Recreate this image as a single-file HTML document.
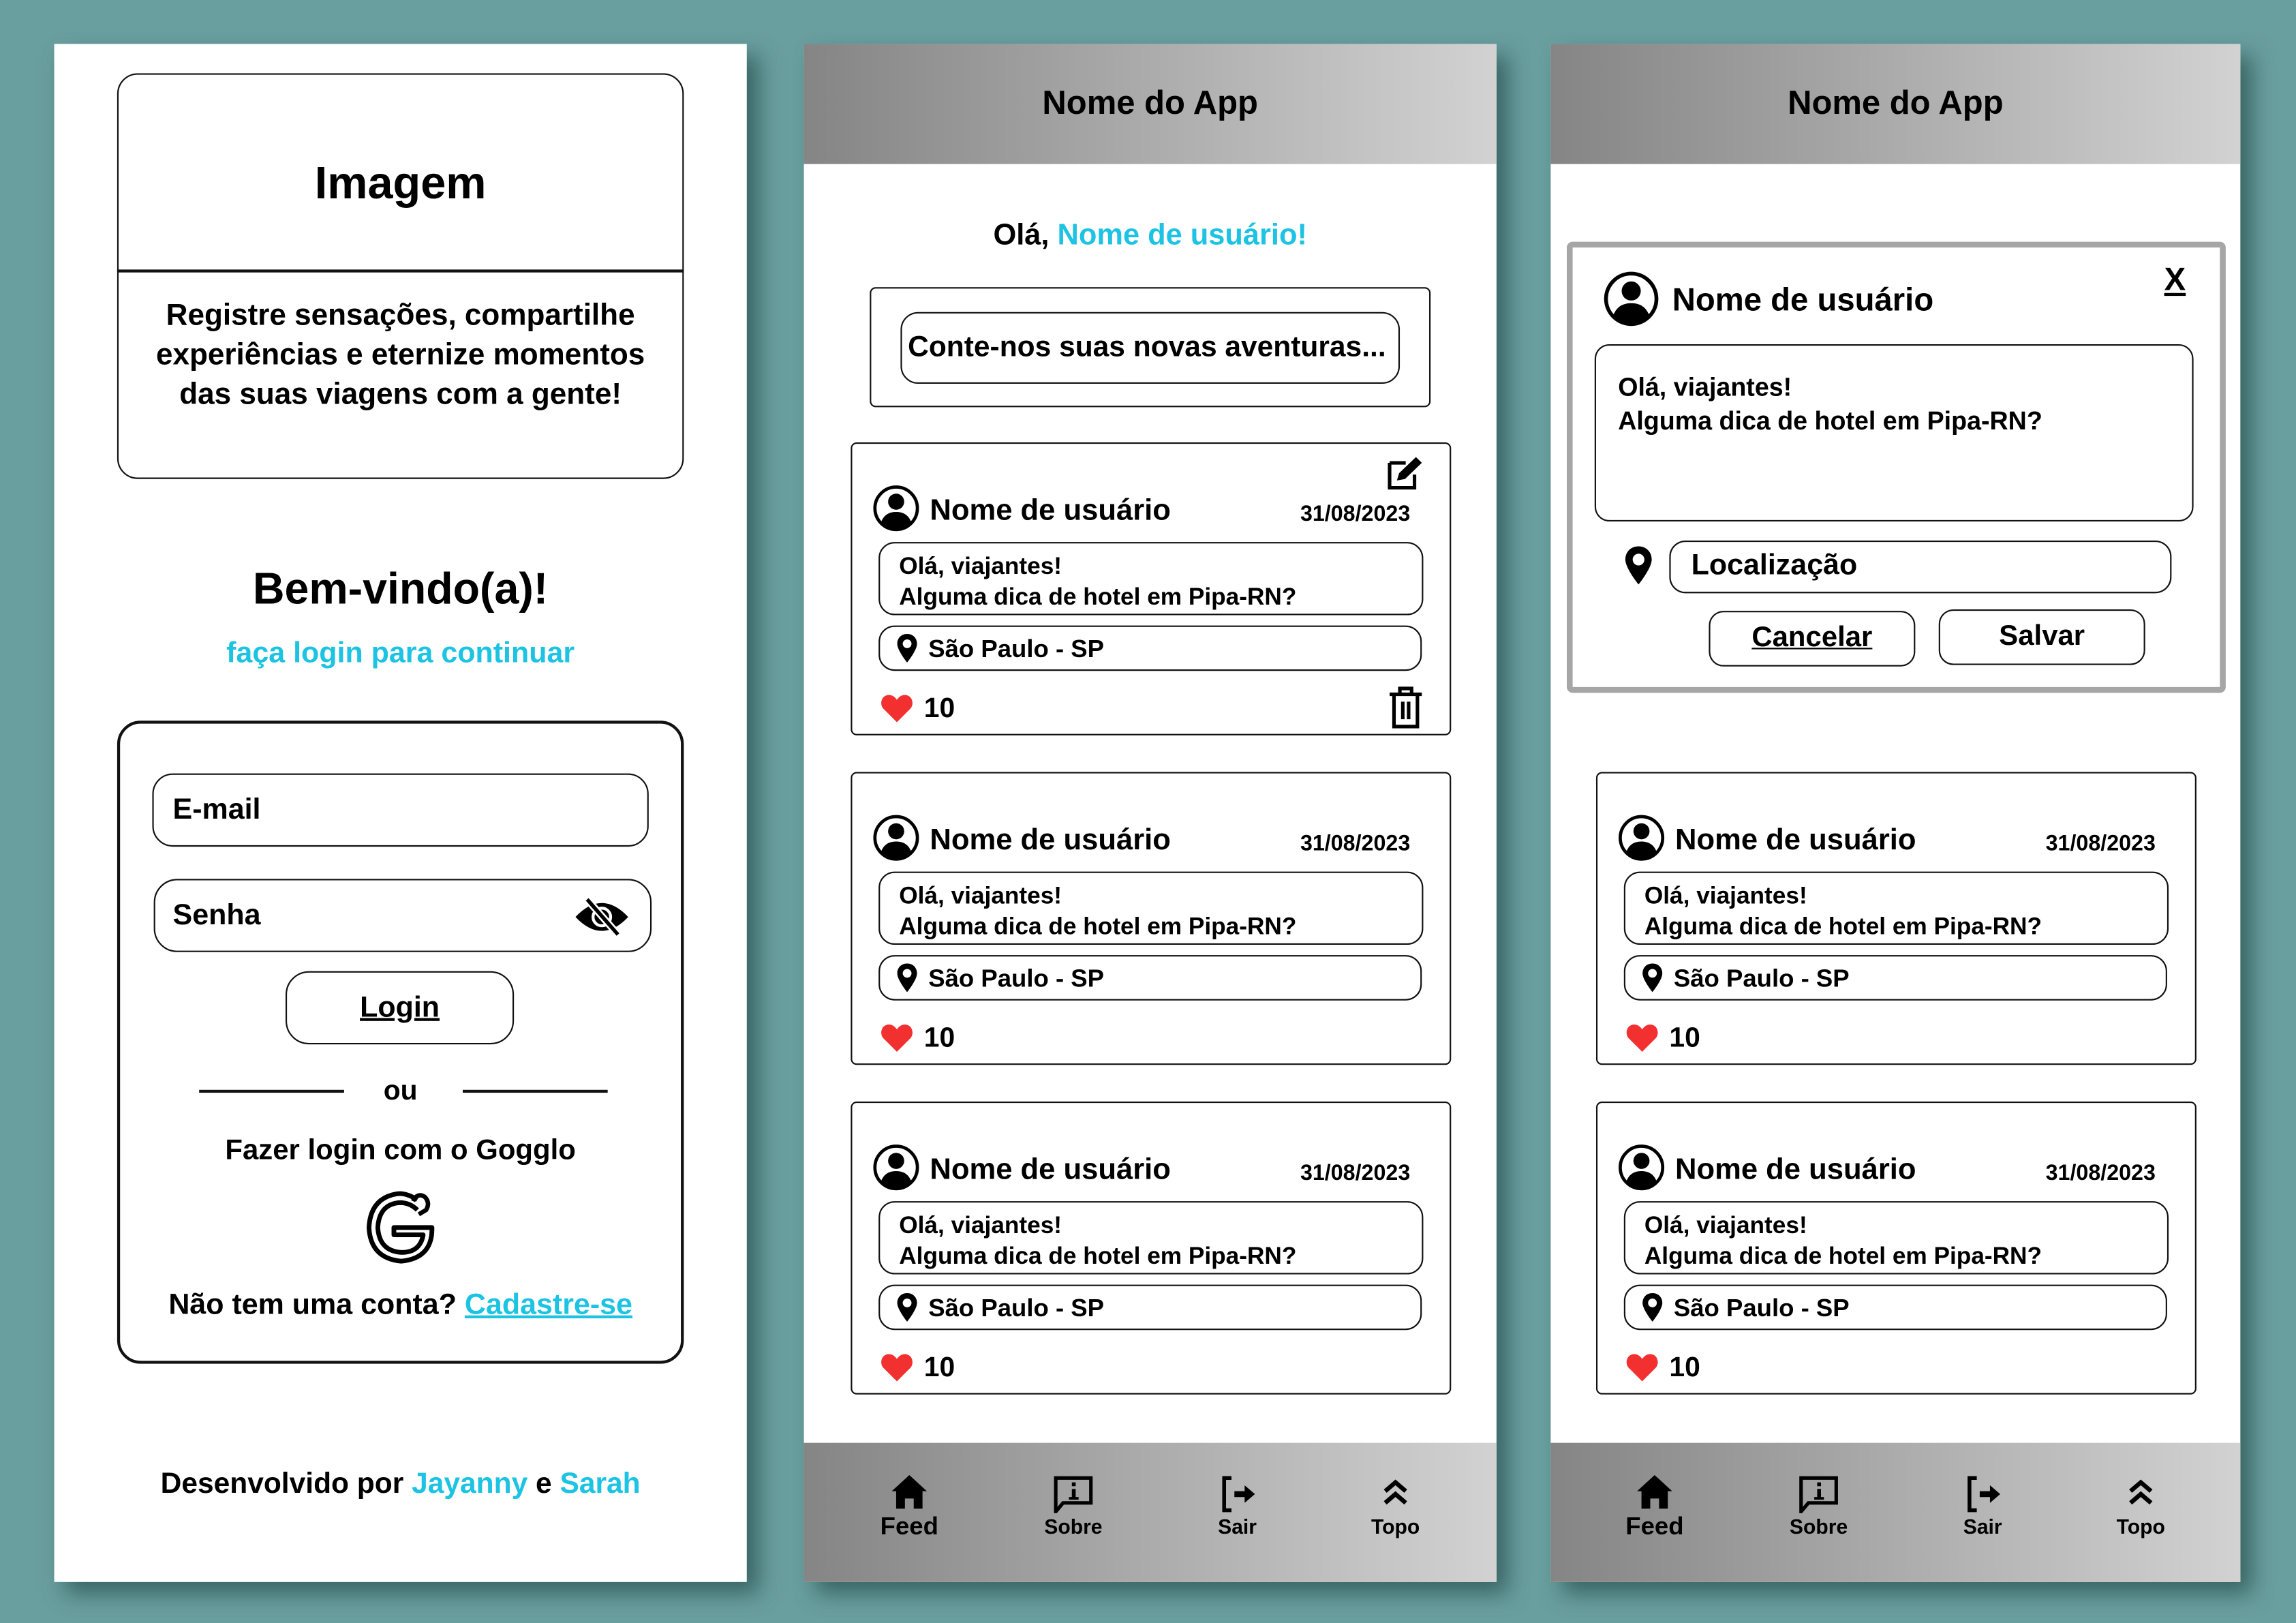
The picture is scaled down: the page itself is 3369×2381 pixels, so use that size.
<!DOCTYPE html>
<html><head><meta charset="utf-8">
<style>
html,body{margin:0;padding:0;width:3369px;height:2381px;overflow:hidden;background:#6a9f9f;}
#w{position:absolute;left:0;top:0;width:1568px;height:1108px;transform:scale(2.14860,2.14892);transform-origin:0 0;font-family:"Liberation Sans",sans-serif;font-weight:bold;color:#000;}
.p{position:absolute;background:#fff;box-shadow:8px 8px 14px rgba(40,80,80,.75);}
.a{position:absolute;}
.t{position:absolute;white-space:nowrap;line-height:1;transform:translateY(-50%);}
.c{left:0;right:0;text-align:center;}
.b{position:absolute;border:1.5px solid #111;box-sizing:border-box;}
.cy{color:#1cc3e2;}
.hd{position:absolute;left:0;right:0;height:82px;background:linear-gradient(90deg,#858585,#d2d2d2);}
.card{position:absolute;width:410px;height:200px;border:1.5px solid #111;border-radius:4px;box-sizing:border-box;background:#fff;}
</style></head><body>
<svg width="0" height="0" style="position:absolute">
<defs>
<symbol id="av" viewBox="0 0 32 32"><circle cx="16" cy="16" r="14.5" fill="none" stroke="#000" stroke-width="2.2"/><circle cx="16" cy="11.5" r="5.5"/><path d="M5.5 26 Q8 18.5 16 18.5 Q24 18.5 26.5 26 Q22 31 16 31 Q10 31 5.5 26Z"/></symbol>
<symbol id="pin" viewBox="0 0 20 28"><path d="M10 1 C4.5 1 1 5 1 10 C1 16 10 27 10 27 C10 27 19 16 19 10 C19 5 15.5 1 10 1Z M10 6 A4 4 0 1 1 9.99 6Z" fill-rule="evenodd"/></symbol>
<symbol id="ht" viewBox="0 0 24 22"><path d="M12 21 L2.5 11.5 C-0.5 8.5 0.5 2 6 1.5 C9 1.3 11 3.5 12 5 C13 3.5 15 1.3 18 1.5 C23.5 2 24.5 8.5 21.5 11.5Z" fill="#f23030"/></symbol>
</defs></svg>
<div id="w">

<!-- Panel 1 -->
<div class="p" style="left:37px;top:30px;width:473px;height:1050px;">
  <div class="b" style="left:43px;top:20px;width:387px;height:277px;border-radius:14px;"></div>
  <div class="a" style="left:43px;top:154px;width:387px;height:1.5px;background:#111;"></div>
  <div class="t c" style="top:95px;font-size:31px;">Imagem</div>
  <div class="t c" style="top:186px;font-size:20.5px;">Registre sensações, compartilhe</div>
  <div class="t c" style="top:213px;font-size:20.5px;">experiências e eternize momentos</div>
  <div class="t c" style="top:240px;font-size:20.5px;">das suas viagens com a gente!</div>
  <div class="t c" style="top:373px;font-size:30px;">Bem-vindo(a)!</div>
  <div class="t c cy" style="top:416px;font-size:20px;">faça login para continuar</div>
  <div class="b" style="left:43px;top:462px;width:387px;height:439px;border-radius:16px;border-width:2.5px;"></div>
  <div class="b" style="left:67px;top:498px;width:339px;height:50px;border-radius:14px;"></div>
  <div class="t" style="left:81px;top:523px;font-size:20px;">E-mail</div>
  <div class="b" style="left:68px;top:570px;width:340px;height:50px;border-radius:16px;"></div>
  <div class="t" style="left:81px;top:595px;font-size:20px;">Senha</div>
  <svg class="a" style="left:355px;top:583px" width="38" height="26" viewBox="0 0 38 26"><path d="M1 13 Q19 -6 37 13 Q19 32 1 13Z"/><circle cx="19" cy="13" r="6" fill="none" stroke="#fff" stroke-width="2"/><line x1="9" y1="1" x2="30" y2="25" stroke="#fff" stroke-width="5"/><line x1="9" y1="1" x2="30" y2="25" stroke="#000" stroke-width="2.5"/></svg>
  <div class="b" style="left:158px;top:633px;width:156px;height:50px;border-radius:16px;"></div>
  <div class="t" style="left:158px;width:156px;text-align:center;top:658px;font-size:20px;text-decoration:underline;">Login</div>
  <div class="a" style="left:99px;top:714px;width:99px;height:1.5px;background:#111;"></div>
  <div class="a" style="left:279px;top:714px;width:99px;height:1.5px;background:#111;"></div>
  <div class="t c" style="top:715px;font-size:19px;">ou</div>
  <div class="t c" style="top:756px;font-size:19.5px;">Fazer login com o Gogglo</div>
  <svg class="a" style="left:210px;top:781px" width="54" height="54" viewBox="0 0 54 54"><path d="M38 8 Q30 3 24 4 Q6 7 5 27 Q6 48 27 50 Q48 48 48 28 L48 27 L22 27 L22 32 L42 32 Q40 44 27 44 Q12 43 11 27 Q12 11 26 10 Q33 10 38 15" fill="none" stroke="#000" stroke-width="3.2" stroke-linejoin="round"/><path d="M35 9 Q38 3 43 6 Q47 10 44 15 L39 18" fill="none" stroke="#000" stroke-width="3"/></svg>
  <div class="t c" style="top:861px;font-size:20px;">Não tem uma conta? <span class="cy" style="text-decoration:underline;">Cadastre-se</span></div>
  <div class="t c" style="top:984px;font-size:19.8px;">Desenvolvido por <span class="cy">Jayanny</span> e <span class="cy">Sarah</span></div>
</div>

<!-- Panel 2 -->
<div class="p" style="left:549px;top:30px;width:473px;height:1050px;">
  <div class="hd" style="top:0;"></div>
  <div class="t c" style="top:40px;font-size:22.8px;">Nome do App</div>
  <div class="t c" style="top:131px;font-size:20.2px;">Olá, <span class="cy">Nome de usuário!</span></div>
  <div class="b" style="left:45px;top:166px;width:383px;height:82px;border-radius:4px;"></div>
  <div class="b" style="left:66px;top:183px;width:341px;height:49px;border-radius:12px;"></div>
  <div class="t" style="left:71px;top:208px;font-size:19.8px;">Conte-nos suas novas aventuras...</div>

  <div class="card" style="left:32px;top:272px;">
    <svg class="a" style="left:365px;top:8px" width="26" height="24" viewBox="0 0 26 24"><path d="M2 5 H13 M2 5 V22 H19 V13" fill="none" stroke="#000" stroke-width="2.4"/><path d="M7 17 L8.5 12 L20 1 L24 5 L12.5 16Z"/></svg>
    <svg class="a" style="left:14px;top:28px" width="32" height="32"><use href="#av"/></svg>
    <div class="t" style="left:53px;top:46px;font-size:20.3px;">Nome de usuário</div>
    <div class="t" style="left:306px;top:48px;font-size:15px;">31/08/2023</div>
    <div class="b" style="left:18px;top:67px;width:372px;height:50px;border-radius:11px;"></div>
    <div class="t" style="left:32px;top:84px;font-size:16.4px;">Olá, viajantes!</div>
    <div class="t" style="left:32px;top:105px;font-size:16.4px;">Alguma dica de hotel em Pipa-RN?</div>
    <div class="b" style="left:18px;top:124px;width:371px;height:31px;border-radius:11px;"></div>
    <svg class="a" style="left:30px;top:129px" width="15" height="21"><use href="#pin"/></svg>
    <div class="t" style="left:52px;top:140px;font-size:17px;">São Paulo - SP</div>
    <svg class="a" style="left:19px;top:170px" width="23" height="21"><use href="#ht"/></svg>
    <div class="t" style="left:49px;top:181px;font-size:19px;">10</div>
    <svg class="a" style="left:366px;top:165px" width="24" height="30" viewBox="0 0 24 30"><path d="M1 6 H23 M8 6 V2 H16 V6 M4 6 V28 H20 V6 M10 11 V23 M14 11 V23" fill="none" stroke="#000" stroke-width="2.4"/></svg>
  </div>

  <div class="card" style="left:32px;top:497px;">
    <svg class="a" style="left:14px;top:28px" width="32" height="32"><use href="#av"/></svg>
    <div class="t" style="left:53px;top:46px;font-size:20.3px;">Nome de usuário</div>
    <div class="t" style="left:306px;top:48px;font-size:15px;">31/08/2023</div>
    <div class="b" style="left:18px;top:67px;width:372px;height:50px;border-radius:11px;"></div>
    <div class="t" style="left:32px;top:84px;font-size:16.4px;">Olá, viajantes!</div>
    <div class="t" style="left:32px;top:105px;font-size:16.4px;">Alguma dica de hotel em Pipa-RN?</div>
    <div class="b" style="left:18px;top:124px;width:371px;height:31px;border-radius:11px;"></div>
    <svg class="a" style="left:30px;top:129px" width="15" height="21"><use href="#pin"/></svg>
    <div class="t" style="left:52px;top:140px;font-size:17px;">São Paulo - SP</div>
    <svg class="a" style="left:19px;top:170px" width="23" height="21"><use href="#ht"/></svg>
    <div class="t" style="left:49px;top:181px;font-size:19px;">10</div>
  </div>

  <div class="card" style="left:32px;top:722px;">
    <svg class="a" style="left:14px;top:28px" width="32" height="32"><use href="#av"/></svg>
    <div class="t" style="left:53px;top:46px;font-size:20.3px;">Nome de usuário</div>
    <div class="t" style="left:306px;top:48px;font-size:15px;">31/08/2023</div>
    <div class="b" style="left:18px;top:67px;width:372px;height:50px;border-radius:11px;"></div>
    <div class="t" style="left:32px;top:84px;font-size:16.4px;">Olá, viajantes!</div>
    <div class="t" style="left:32px;top:105px;font-size:16.4px;">Alguma dica de hotel em Pipa-RN?</div>
    <div class="b" style="left:18px;top:124px;width:371px;height:31px;border-radius:11px;"></div>
    <svg class="a" style="left:30px;top:129px" width="15" height="21"><use href="#pin"/></svg>
    <div class="t" style="left:52px;top:140px;font-size:17px;">São Paulo - SP</div>
    <svg class="a" style="left:19px;top:170px" width="23" height="21"><use href="#ht"/></svg>
    <div class="t" style="left:49px;top:181px;font-size:19px;">10</div>
  </div>

  <div class="hd" style="top:955px;height:95px;"></div>
  <svg class="a" style="left:59px;top:976px" width="26" height="24" viewBox="0 0 26 24"><path d="M13 1 L1 12 L4 12 L4 24 L10 24 L10 17 L16 17 L16 24 L22 24 L22 12 L25 12Z"/></svg>
  <div class="t" style="left:40px;width:64px;text-align:center;top:1012px;font-size:17px;">Feed</div>
  <svg class="a" style="left:170px;top:977px" width="28" height="26" viewBox="0 0 28 26"><path d="M2 2 H26 V19 H7 L2 25Z" fill="none" stroke="#000" stroke-width="2.4"/><rect x="13" y="5" width="2.6" height="2.6"/><rect x="13" y="9.5" width="2.6" height="7"/><rect x="11" y="15" width="6.6" height="1.8"/></svg>
  <div class="t" style="left:152px;width:64px;text-align:center;top:1012px;font-size:14px;">Sobre</div>
  <svg class="a" style="left:284px;top:977px" width="26" height="26" viewBox="0 0 26 26"><path d="M8 2 H3 V24 H8" fill="none" stroke="#000" stroke-width="2.6"/><path d="M10 11 H17 V7 L24 13 L17 19 V15 H10Z"/></svg>
  <div class="t" style="left:264px;width:64px;text-align:center;top:1012px;font-size:14px;">Sair</div>
  <svg class="a" style="left:394px;top:979px" width="20" height="20" viewBox="0 0 20 20"><path d="M3 9 L10 3 L17 9 M3 17 L10 11 L17 17" fill="none" stroke="#000" stroke-width="3"/></svg>
  <div class="t" style="left:372px;width:64px;text-align:center;top:1012px;font-size:14px;">Topo</div>
</div>

<!-- Panel 3 -->
<div class="p" style="left:1059px;top:30px;width:471px;height:1050px;">
  <div class="hd" style="top:0;"></div>
  <div class="t c" style="top:40px;font-size:22.8px;">Nome do App</div>

  <div class="a" style="left:11px;top:135px;width:450px;height:308px;border:4px solid #a6a6a6;border-radius:4px;box-sizing:border-box;"></div>
  <svg class="a" style="left:36px;top:155px" width="38" height="38"><use href="#av"/></svg>
  <div class="t" style="left:83px;top:175px;font-size:22px;">Nome de usuário</div>
  <div class="t" style="left:419px;top:161px;font-size:22px;text-decoration:underline;">X</div>
  <div class="b" style="left:30px;top:205px;width:409px;height:121px;border-radius:10px;"></div>
  <div class="t" style="left:46px;top:235px;font-size:17.5px;">Olá, viajantes!</div>
  <div class="t" style="left:46px;top:258px;font-size:17.5px;">Alguma dica de hotel em Pipa-RN?</div>
  <svg class="a" style="left:50px;top:342px" width="20" height="28"><use href="#pin"/></svg>
  <div class="b" style="left:81px;top:339px;width:343px;height:36px;border-radius:11px;"></div>
  <div class="t" style="left:96px;top:356px;font-size:20px;">Localização</div>
  <div class="b" style="left:108px;top:387px;width:141px;height:38px;border-radius:10px;"></div>
  <div class="t" style="left:108px;width:141px;text-align:center;top:406px;font-size:19.5px;text-decoration:underline;">Cancelar</div>
  <div class="b" style="left:265px;top:386px;width:141px;height:38px;border-radius:10px;"></div>
  <div class="t" style="left:265px;width:141px;text-align:center;top:405px;font-size:19.5px;">Salvar</div>

  <div class="card" style="left:31px;top:497px;">
    <svg class="a" style="left:14px;top:28px" width="32" height="32"><use href="#av"/></svg>
    <div class="t" style="left:53px;top:46px;font-size:20.3px;">Nome de usuário</div>
    <div class="t" style="left:306px;top:48px;font-size:15px;">31/08/2023</div>
    <div class="b" style="left:18px;top:67px;width:372px;height:50px;border-radius:11px;"></div>
    <div class="t" style="left:32px;top:84px;font-size:16.4px;">Olá, viajantes!</div>
    <div class="t" style="left:32px;top:105px;font-size:16.4px;">Alguma dica de hotel em Pipa-RN?</div>
    <div class="b" style="left:18px;top:124px;width:371px;height:31px;border-radius:11px;"></div>
    <svg class="a" style="left:30px;top:129px" width="15" height="21"><use href="#pin"/></svg>
    <div class="t" style="left:52px;top:140px;font-size:17px;">São Paulo - SP</div>
    <svg class="a" style="left:19px;top:170px" width="23" height="21"><use href="#ht"/></svg>
    <div class="t" style="left:49px;top:181px;font-size:19px;">10</div>
  </div>

  <div class="card" style="left:31px;top:722px;">
    <svg class="a" style="left:14px;top:28px" width="32" height="32"><use href="#av"/></svg>
    <div class="t" style="left:53px;top:46px;font-size:20.3px;">Nome de usuário</div>
    <div class="t" style="left:306px;top:48px;font-size:15px;">31/08/2023</div>
    <div class="b" style="left:18px;top:67px;width:372px;height:50px;border-radius:11px;"></div>
    <div class="t" style="left:32px;top:84px;font-size:16.4px;">Olá, viajantes!</div>
    <div class="t" style="left:32px;top:105px;font-size:16.4px;">Alguma dica de hotel em Pipa-RN?</div>
    <div class="b" style="left:18px;top:124px;width:371px;height:31px;border-radius:11px;"></div>
    <svg class="a" style="left:30px;top:129px" width="15" height="21"><use href="#pin"/></svg>
    <div class="t" style="left:52px;top:140px;font-size:17px;">São Paulo - SP</div>
    <svg class="a" style="left:19px;top:170px" width="23" height="21"><use href="#ht"/></svg>
    <div class="t" style="left:49px;top:181px;font-size:19px;">10</div>
  </div>

  <div class="hd" style="top:955px;height:95px;"></div>
  <svg class="a" style="left:58px;top:976px" width="26" height="24" viewBox="0 0 26 24"><path d="M13 1 L1 12 L4 12 L4 24 L10 24 L10 17 L16 17 L16 24 L22 24 L22 12 L25 12Z"/></svg>
  <div class="t" style="left:39px;width:64px;text-align:center;top:1012px;font-size:17px;">Feed</div>
  <svg class="a" style="left:169px;top:977px" width="28" height="26" viewBox="0 0 28 26"><path d="M2 2 H26 V19 H7 L2 25Z" fill="none" stroke="#000" stroke-width="2.4"/><rect x="13" y="5" width="2.6" height="2.6"/><rect x="13" y="9.5" width="2.6" height="7"/><rect x="11" y="15" width="6.6" height="1.8"/></svg>
  <div class="t" style="left:151px;width:64px;text-align:center;top:1012px;font-size:14px;">Sobre</div>
  <svg class="a" style="left:283px;top:977px" width="26" height="26" viewBox="0 0 26 26"><path d="M8 2 H3 V24 H8" fill="none" stroke="#000" stroke-width="2.6"/><path d="M10 11 H17 V7 L24 13 L17 19 V15 H10Z"/></svg>
  <div class="t" style="left:263px;width:64px;text-align:center;top:1012px;font-size:14px;">Sair</div>
  <svg class="a" style="left:393px;top:979px" width="20" height="20" viewBox="0 0 20 20"><path d="M3 9 L10 3 L17 9 M3 17 L10 11 L17 17" fill="none" stroke="#000" stroke-width="3"/></svg>
  <div class="t" style="left:371px;width:64px;text-align:center;top:1012px;font-size:14px;">Topo</div>
</div>

</div>
</body></html>
